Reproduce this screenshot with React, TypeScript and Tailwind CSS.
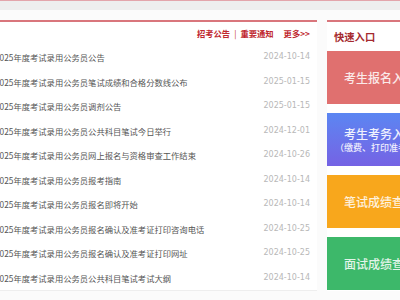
import React from 'react'

// News list rows (title, date)
const NEWS_ITEMS: [string, string][] = [
  ['2025年度考试录用公务员公告', '2024-10-14'],
  ['2025年度考试录用公务员笔试成绩和合格分数线公布', '2025-01-15'],
  ['2025年度考试录用公务员调剂公告', '2025-01-15'],
  ['2025年度考试录用公务员公共科目笔试今日举行', '2024-12-01'],
  ['2025年度考试录用公务员网上报名与资格审查工作结束', '2024-10-26'],
  ['2025年度考试录用公务员报考指南', '2024-10-14'],
  ['2025年度考试录用公务员报名即将开始', '2024-10-14'],
  ['2025年度考试录用公务员报名确认及准考证打印咨询电话', '2024-10-25'],
  ['2025年度考试录用公务员报名确认及准考证打印网址', '2024-10-25'],
  ['2025年度考试录用公务员公共科目笔试考试大纲', '2024-10-14'],
]

function NewsPanel() {
  return (
    <div className="w-[332px] shrink-0 bg-white border-t-2 border-[#d9767c] border-b border-b-[#eeeeee]">
      {/* Header links */}
      <div className="h-[23px] flex items-center justify-end pr-[7px] text-[8.3px] font-bold text-[#c0282f]">
        <span>招考公告</span>
        <span className="mx-[4px] font-normal">|</span>
        <span>重要通知</span>
        <span className="ml-[10px]">更多&gt;&gt;</span>
      </div>
      {/* Rows */}
      <ul>
        {NEWS_ITEMS.map(([title, date]) => (
          <li key={title} className="h-[24.5px] flex items-center justify-between pl-[10px] pr-[7px] text-[8.3px]">
            <span className="text-[#555555] whitespace-nowrap">{title}</span>
            <span className="text-[#b8b8b8] font-['DejaVu_Sans','Noto_Sans_CJK_SC',sans-serif] text-[8px]">{date}</span>
          </li>
        ))}
      </ul>
    </div>
  )
}

function QuickEntry() {
  return (
    <div className="w-[110px] shrink-0 bg-white border-t-2 border-[#d9767c]">
      <div className="h-[29px] flex items-center pl-[7px] text-[10.3px] font-bold text-[#a52a2f]">快速入口</div>
      <div className="flex flex-col gap-[9px]">
        <div className="w-[106px] h-[53px] bg-[#e0706f] flex items-center justify-center text-[12px] font-medium text-white/85">
          考生报名入口
        </div>
        <div className="w-[106px] h-[53px] bg-gradient-to-b from-[#5a86f2] to-[#7462e4] flex flex-col items-center justify-center text-white/90">
          <span className="text-[12px] font-medium leading-[16px]">考生考务入口</span>
          <span className="text-[9px] font-medium leading-[12px]">（缴费、打印准考证）</span>
        </div>
        <div className="w-[106px] h-[53px] bg-[#f8a71c] flex items-center justify-center text-[12px] font-medium text-white/85">
          笔试成绩查询
        </div>
        <div className="w-[106px] h-[53px] bg-[#3db86a] flex items-center justify-center text-[12px] font-medium text-white/85">
          面试成绩查询
        </div>
      </div>
    </div>
  )
}

export default function App() {
  return (
    <div className="w-[400px] h-[300px] overflow-hidden bg-[#fbfbfb] font-['Noto_Sans_CJK_SC',sans-serif]">
      {/* Top strip */}
      <div className="h-[10px] bg-[#eeeeee] border-t border-[#e3a5ab]" />
      <div className="flex gap-[10px] mt-[10px] ml-[-15px]">
        <NewsPanel />
        <QuickEntry />
      </div>
    </div>
  )
}
